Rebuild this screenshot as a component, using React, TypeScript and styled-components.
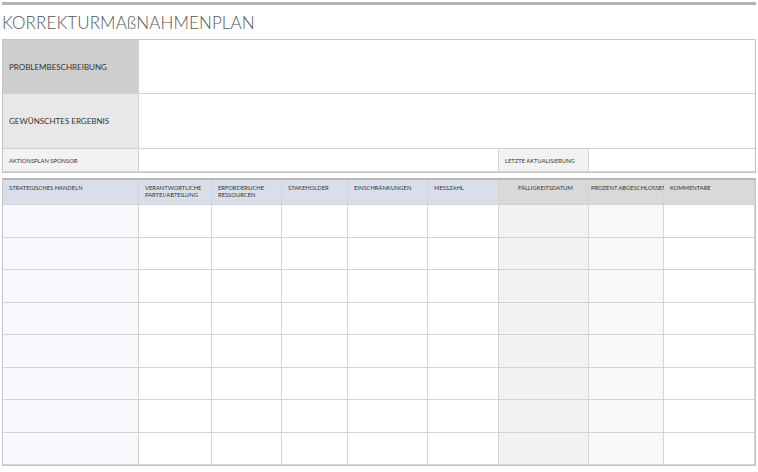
import * as React from 'react';
import styled, { createGlobalStyle } from 'styled-components';

const Global = createGlobalStyle`
  body { margin: 0; font-family: Lato, "Liberation Sans", sans-serif; background: #fff; }
`;

const line = '#d4d4d4';

const Page = styled.div`
  width: 754px;
  padding: 2px 2px 0 2px;
`;

const TopBar = styled.div`
  height: 3px;
  background: #b3b3b3;
`;

const Title = styled.h1`
  margin: 0;
  height: 34px;
  display: flex;
  align-items: center;
  font-size: 17px;
  font-weight: 300;
  color: #555;
  letter-spacing: 0.1px;
`;

const InfoBox = styled.div`
  display: grid;
  grid-template-columns: 136px 360px 90px 1fr;
  grid-template-rows: 54px 55px 23px;
  border: 1px solid #c4c4c4;
`;

const InfoLabel = styled.div<{ $bg: string; $small?: boolean }>`
  background: ${p => p.$bg};
  display: flex;
  align-items: center;
  padding-left: 6px;
  font-size: ${p => (p.$small ? '5.8px' : '8px')};
  color: #333;
  border-right: 1px solid ${line};
  border-bottom: 1px solid ${line};
`;

const InfoValue = styled.div<{ $span?: number; $last?: boolean }>`
  grid-column: span ${p => p.$span ?? 1};
  border-right: ${p => (p.$last ? 'none' : `1px solid ${line}`)};
  border-bottom: 1px solid ${line};
`;

const Table = styled.div`
  margin-top: 5px;
  display: grid;
  grid-template-columns: 136px 73px 70px 66px 80px 71px 90px 75px 1fr;
  grid-template-rows: 25px repeat(8, 32.5px);
  border: 1px solid #c4c4c4;
  border-top: 2px solid #b8b8b8;
`;

const Head = styled.div<{ $bg: string; $center?: boolean }>`
  background: ${p => p.$bg};
  font-size: 5.8px;
  line-height: 6.5px;
  color: #333;
  padding: 5px 2px 0 6px;
  text-align: ${p => (p.$center ? 'center' : 'left')};
  border-right: 1px solid ${line};
  border-bottom: 1px solid ${line};
`;

const Cell = styled.div<{ $bg: string }>`
  background: ${p => p.$bg};
  border-right: 1px solid ${line};
  border-bottom: 1px solid ${line};
`;

const NoWrap = styled.span`
  white-space: nowrap;
  margin-left: -4px;
`;

const heads: [React.ReactNode, string, boolean?][] = [
  ['STRATEGISCHES HANDELN', '#d9dfea'],
  ['VERANTWORTLICHE PARTEI/ABTEILUNG', '#d9dfea'],
  ['ERFORDERLICHE RESSOURCEN', '#d9dfea'],
  ['STAKEHOLDER', '#d9dfea'],
  ['EINSCHRÄNKUNGEN', '#d9dfea'],
  ['MESSZAHL', '#d9dfea'],
  ['FÄLLIGKEITSDATUM', '#d9d9d9', true],
  [<NoWrap>PROZENT ABGESCHLOSSEN</NoWrap>, '#d9d9d9'],
  ['KOMMENTARE', '#d9d9d9'],
];

const bodyBg = ['#f7f9fc', '#fff', '#fff', '#fff', '#fff', '#fff', '#f2f2f2', '#f8f8f8', '#fff'];

export default function App() {
  return (
    <Page>
      <Global />
      <TopBar />
      <Title>KORREKTURMAßNAHMENPLAN</Title>
      <InfoBox>
        <InfoLabel $bg="#d0cfcf">PROBLEMBESCHREIBUNG</InfoLabel>
        <InfoValue $span={3} $last />
        <InfoLabel $bg="#e8e8e8">GEWÜNSCHTES ERGEBNIS</InfoLabel>
        <InfoValue $span={3} $last />
        <InfoLabel $bg="#f2f2f2" $small>AKTIONSPLAN SPONSOR</InfoLabel>
        <InfoValue />
        <InfoLabel $bg="#f2f2f2" $small>LETZTE AKTUALISIERUNG</InfoLabel>
        <InfoValue $last />
      </InfoBox>
      <Table>
        {heads.map(([t, bg, c], i) => (
          <Head key={i} $bg={bg} $center={c}>{t}</Head>
        ))}
        {Array.from({ length: 8 }).map((_, r) =>
          bodyBg.map((bg, i) => <Cell key={`${r}-${i}`} $bg={bg} />)
        )}
      </Table>
    </Page>
  );
}
